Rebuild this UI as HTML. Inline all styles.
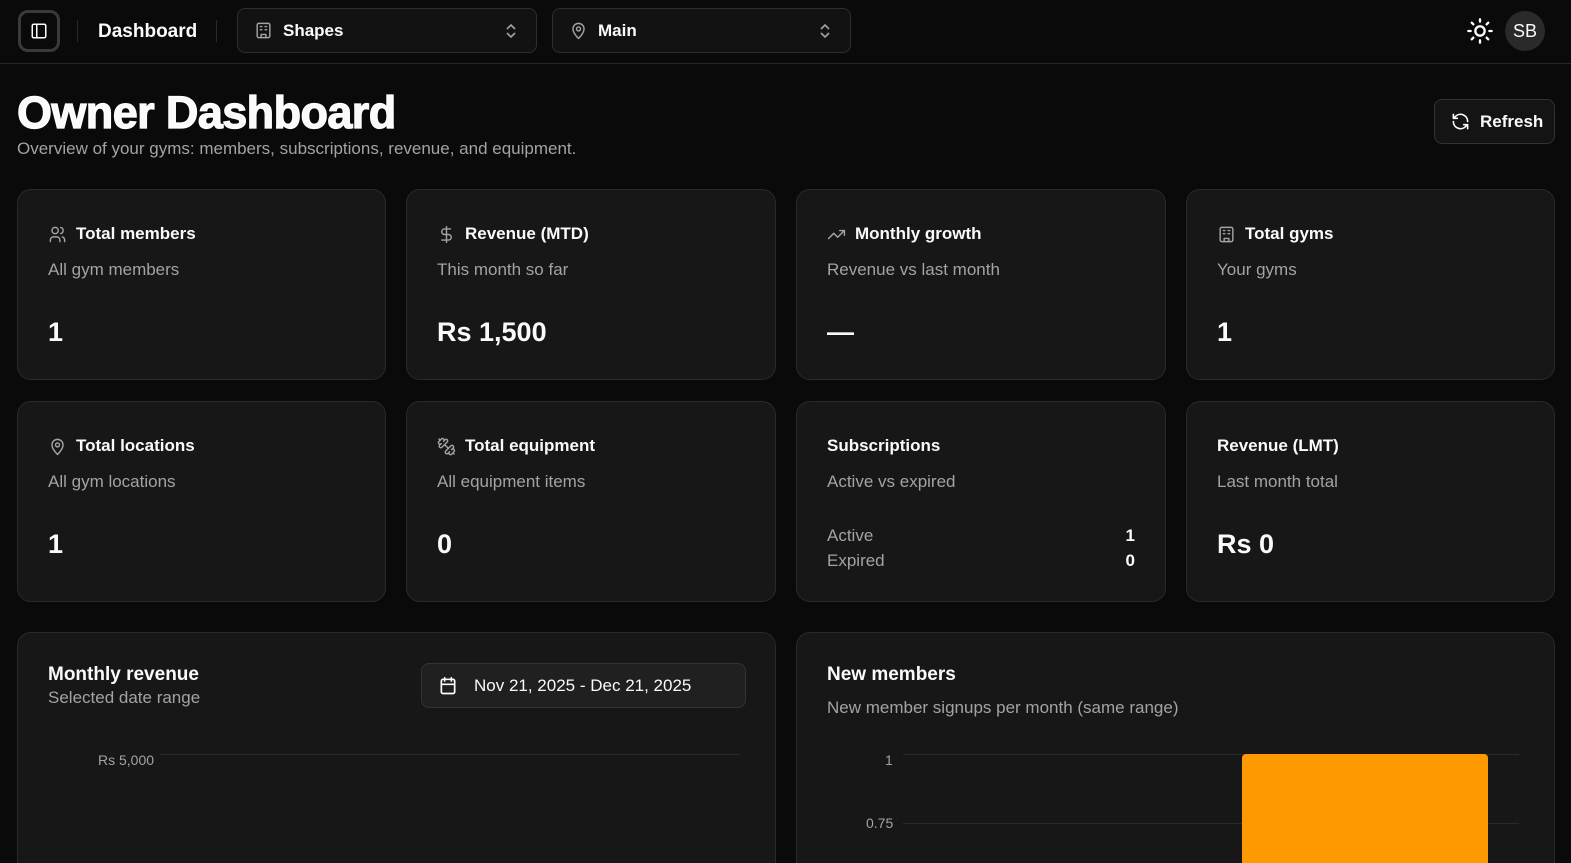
<!DOCTYPE html>
<html><head><meta charset="utf-8">
<style>
*{box-sizing:border-box;margin:0;padding:0}
html,body{width:1571px;height:863px;overflow:hidden}
body{background:#0a0a0a;color:#fafafa;font-family:"Liberation Sans",sans-serif;position:relative}
.a{position:absolute}
.hdr{left:0;top:0;width:1571px;height:64px;border-bottom:1px solid #262626}
.sel{height:45px;top:8px;border:1px solid #2e2e2e;border-radius:8px;background:#121212;display:flex;align-items:center;padding-left:16px;font-size:17px;font-weight:bold}
.card{background:#171717;border:1px solid #2a2a2a;border-radius:14px}
.ct{font-size:17px;font-weight:bold;display:flex;align-items:center;gap:9px;left:30px;top:34px}
.cs{font-size:17px;color:#a3a3a3;left:30px;top:70px}
.cv{font-size:27px;font-weight:bold;left:30px;top:127px}
svg.i{width:19px;height:19px;fill:none;stroke:#a3a3a3;stroke-width:1.8;stroke-linecap:round;stroke-linejoin:round}
</style></head><body>
<div class="a hdr"></div>
<div class="a" style="left:18px;top:10px;width:42px;height:42px;border:3px solid #3a3a3a;border-radius:10px;display:flex;align-items:center;justify-content:center">
<svg width="18" height="18" viewBox="0 0 24 24" fill="none" stroke="#fff" stroke-width="2"><rect x="3" y="3" width="18" height="18" rx="2"/><path d="M9 3v18"/></svg></div>
<div class="a" style="left:77px;top:20px;width:1px;height:22px;background:#2a2a2a"></div>
<div class="a" style="left:98px;top:21px;font-size:19px;font-weight:bold">Dashboard</div>
<div class="a" style="left:216px;top:20px;width:1px;height:22px;background:#2a2a2a"></div>
<div class="a sel" style="left:237px;width:300px"><svg class="i" viewBox="0 0 24 24"><rect x="4" y="3" width="16" height="18" rx="2"/><path d="M9 21v-4h6v4M8 7h2M14 7h2M8 11h2M14 11h2"/></svg><span style="margin-left:10px">Shapes</span>
<svg class="a" style="right:18px;top:14px" width="14" height="16" viewBox="0 0 14 16" fill="none" stroke="#a3a3a3" stroke-width="1.6"><path d="M3 6l4-4 4 4M3 10l4 4 4-4"/></svg></div>
<div class="a sel" style="left:552px;width:299px"><svg class="i" viewBox="0 0 24 24"><path d="M12 22s7-6.5 7-12a7 7 0 0 0-14 0c0 5.5 7 12 7 12z"/><circle cx="12" cy="10" r="2.5"/></svg><span style="margin-left:10px">Main</span>
<svg class="a" style="right:18px;top:14px" width="14" height="16" viewBox="0 0 14 16" fill="none" stroke="#a3a3a3" stroke-width="1.6"><path d="M3 6l4-4 4 4M3 10l4 4 4-4"/></svg></div>
<svg class="a" style="left:1466px;top:17px" width="28" height="28" viewBox="0 0 24 24" fill="none" stroke="#fff" stroke-width="2" stroke-linecap="round"><circle cx="12" cy="12" r="4"/><path d="M12 2v2M12 20v2M4.9 4.9l1.4 1.4M17.7 17.7l1.4 1.4M2 12h2M20 12h2M6.3 17.7l-1.4 1.4M19.1 4.9l-1.4 1.4"/></svg>
<div class="a" style="left:1505px;top:11px;width:40px;height:40px;border-radius:50%;background:#2a2a2a;display:flex;align-items:center;justify-content:center;font-size:18px">SB</div>

<div class="a" style="left:17px;top:87px;font-size:45px;font-weight:bold;letter-spacing:-0.6px;-webkit-text-stroke:1.2px #fff">Owner Dashboard</div>
<div class="a" style="left:17px;top:139px;font-size:17px;color:#a3a3a3">Overview of your gyms: members, subscriptions, revenue, and equipment.</div>
<div class="a" style="left:1434px;top:99px;width:121px;height:45px;border:1px solid #333;border-radius:8px;background:#141414;display:flex;align-items:center;padding-left:16px;gap:10px;font-size:17px;font-weight:bold">
<svg width="19" height="19" viewBox="0 0 24 24" fill="none" stroke="#fff" stroke-width="2" stroke-linecap="round" stroke-linejoin="round"><path d="M21 12a9 9 0 0 0-15.5-6.3L3 8M3 3v5h5M3 12a9 9 0 0 0 15.5 6.3L21 16M21 21v-5h-5"/></svg>Refresh</div>

<div class="a card" style="left:17px;top:189px;width:369px;height:191px">
<div class="a ct"><svg class="i" viewBox="0 0 24 24"><circle cx="9" cy="7" r="4"/><path d="M3 21v-2a4 4 0 0 1 4-4h4a4 4 0 0 1 4 4v2M16 3.1a4 4 0 0 1 0 7.8M21 21v-2a4 4 0 0 0-3-3.9"/></svg>Total members</div>
<div class="a cs">All gym members</div><div class="a cv">1</div></div>
<div class="a card" style="left:406px;top:189px;width:370px;height:191px">
<div class="a ct"><svg class="i" viewBox="0 0 24 24"><path d="M12 2v20M17 5H9.5a3.5 3.5 0 0 0 0 7h5a3.5 3.5 0 0 1 0 7H6"/></svg>Revenue (MTD)</div>
<div class="a cs">This month so far</div><div class="a cv">Rs 1,500</div></div>
<div class="a card" style="left:796px;top:189px;width:370px;height:191px">
<div class="a ct"><svg class="i" viewBox="0 0 24 24"><path d="M22 7l-8.5 8.5-5-5L2 17M16 7h6v6"/></svg>Monthly growth</div>
<div class="a cs">Revenue vs last month</div><div class="a cv">—</div></div>
<div class="a card" style="left:1186px;top:189px;width:369px;height:191px">
<div class="a ct"><svg class="i" viewBox="0 0 24 24"><rect x="4" y="3" width="16" height="18" rx="2"/><path d="M9 21v-4h6v4M8 7h2M14 7h2M8 11h2M14 11h2"/></svg>Total gyms</div>
<div class="a cs">Your gyms</div><div class="a cv">1</div></div>

<div class="a card" style="left:17px;top:401px;width:369px;height:201px">
<div class="a ct"><svg class="i" viewBox="0 0 24 24"><path d="M12 22s7-6.5 7-12a7 7 0 0 0-14 0c0 5.5 7 12 7 12z"/><circle cx="12" cy="10" r="2.5"/></svg>Total locations</div>
<div class="a cs">All gym locations</div><div class="a cv">1</div></div>
<div class="a card" style="left:406px;top:401px;width:370px;height:201px">
<div class="a ct"><svg class="i" viewBox="0 0 24 24"><path d="M14.4 14.4L9.6 9.6M18.6 21.5a2 2 0 1 1-2.8-2.8l-1.8 1.7a2 2 0 1 1-2.8-2.8l6.2-6.2a2 2 0 1 1 2.8 2.8l-1.8 1.7a2 2 0 1 1 2.8 2.8zM21.5 21.5l-1.4-1.4M3.9 3.9L2.5 2.5M6.4 12.8a2 2 0 1 1-2.8-2.8l1.8-1.7a2 2 0 1 1-2.8-2.8l2.8-2.8a2 2 0 1 1 2.8 2.8l1.7-1.8a2 2 0 1 1 2.8 2.8z"/></svg>Total equipment</div>
<div class="a cs">All equipment items</div><div class="a cv">0</div></div>
<div class="a card" style="left:796px;top:401px;width:370px;height:201px">
<div class="a ct">Subscriptions</div>
<div class="a cs">Active vs expired</div>
<div class="a" style="left:30px;top:124px;font-size:17px;color:#a3a3a3">Active</div>
<div class="a" style="right:30px;top:124px;font-size:17px;font-weight:bold">1</div>
<div class="a" style="left:30px;top:149px;font-size:17px;color:#a3a3a3">Expired</div>
<div class="a" style="right:30px;top:149px;font-size:17px;font-weight:bold">0</div></div>
<div class="a card" style="left:1186px;top:401px;width:369px;height:201px">
<div class="a ct">Revenue (LMT)</div>
<div class="a cs">Last month total</div><div class="a cv">Rs 0</div></div>

<div class="a card" style="left:17px;top:632px;width:759px;height:250px">
<div class="a" style="left:30px;top:31px;font-size:19px;font-weight:bold">Monthly revenue</div>
<div class="a" style="left:30px;top:55px;font-size:17px;color:#a3a3a3">Selected date range</div>
<div class="a" style="left:403px;top:30px;width:325px;height:45px;border:1px solid #333;border-radius:8px;background:#202020;display:flex;align-items:center;padding-left:16px;gap:12px;font-size:17px">
<svg width="20" height="20" viewBox="0 0 24 24" fill="none" stroke="#fff" stroke-width="2" stroke-linecap="round"><rect x="4" y="4" width="16" height="17" rx="2"/><path d="M8 2v4M16 2v4M4 10h16"/></svg><span style="margin-left:4px">Nov 21, 2025 - Dec 21, 2025</span></div>
<div class="a" style="left:80px;top:119px;font-size:14px;color:#a3a3a3">Rs 5,000</div>
<div class="a" style="left:142px;top:121px;width:580px;height:1px;background:#2a2a2a"></div>
</div>
<div class="a card" style="left:796px;top:632px;width:759px;height:250px">
<div class="a" style="left:30px;top:31px;font-size:19px;font-weight:bold">New members</div>
<div class="a" style="left:30px;top:65px;font-size:17px;color:#a3a3a3">New member signups per month (same range)</div>
<div class="a" style="left:88px;top:119px;font-size:14px;color:#a3a3a3">1</div>
<div class="a" style="left:69px;top:182px;font-size:14px;color:#a3a3a3">0.75</div>
<div class="a" style="left:106px;top:121px;width:616px;height:1px;background:#2a2a2a"></div>
<div class="a" style="left:106px;top:190px;width:616px;height:1px;background:#2a2a2a"></div>
<div class="a" style="left:445px;top:121px;width:246px;height:140px;background:#ff9900;border-radius:4px 4px 0 0"></div>
</div>
</body></html>
